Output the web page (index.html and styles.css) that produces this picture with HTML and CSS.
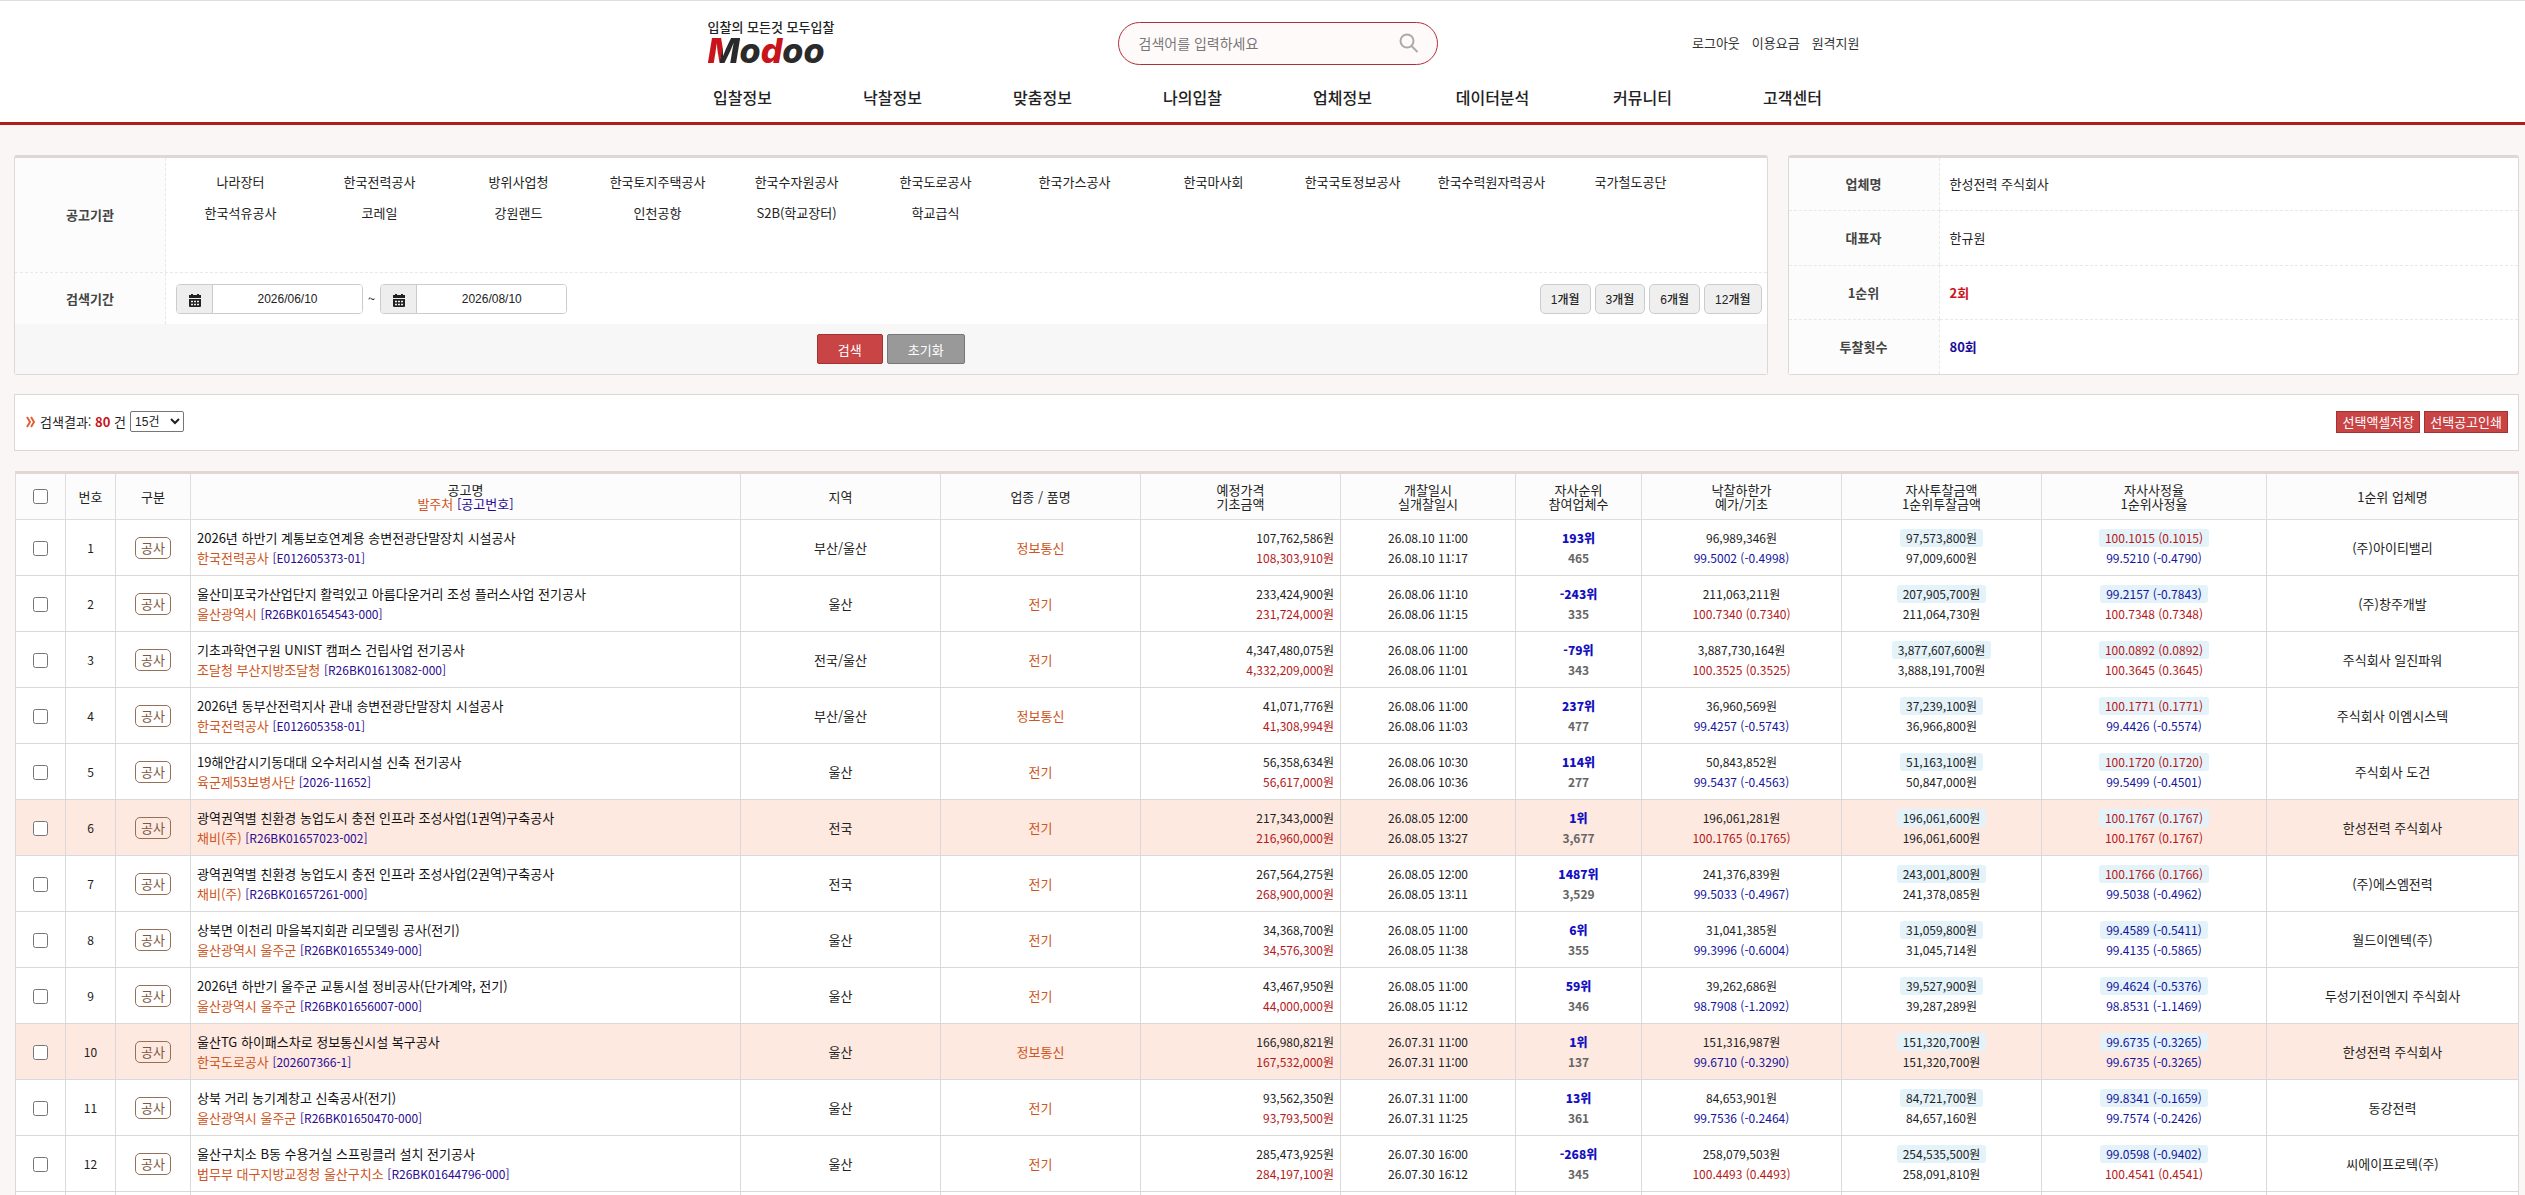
FILE: index.html
```html
<!DOCTYPE html>
<html lang="ko">
<head>
	<meta charset="UTF-8">
	<meta name="viewport" content="width=device-width, initial-scale=1.0">
	<title>모두입찰</title>
	<link rel="stylesheet" href="styles.css">
</head>
<body>

<!-- 상단 -->
<header class="header">
	<div class="header-inner">
		<div class="header-top">
			<a href="#" class="logo">
				<span class="logo-copy">입찰의 모든것 모두입찰</span>
				<span class="logo-name"><span class="logo-m">M</span>o<span class="logo-d">d</span>oo</span>
			</a>
			<form class="search">
				<input type="text" aria-label="검색어" placeholder="검색어를 입력하세요">
				<button type="button" aria-label="찾기">
					<svg width="20" height="20" viewBox="0 0 20 20" fill="none" stroke="#aaa" stroke-width="2"><circle cx="8" cy="8" r="6.5"/><path d="M12.5 13l6 6"/></svg>
				</button>
			</form>
			<div class="util">
				<a href="#">로그아웃</a>
				<a href="#">이용요금</a>
				<a href="#">원격지원</a>
			</div>
		</div>
		<nav class="nav">
			<a href="#">입찰정보</a>
			<a href="#">낙찰정보</a>
			<a href="#">맞춤정보</a>
			<a href="#">나의입찰</a>
			<a href="#">업체정보</a>
			<a href="#">데이터분석</a>
			<a href="#">커뮤니티</a>
			<a href="#">고객센터</a>
		</nav>
	</div>
</header>

<main class="content">
	<div class="top-row">
		<!-- 검색 조건 -->
		<form class="panel filter">
			<div class="row row-org">
				<div class="label">공고기관</div>
				<div class="orgs">
					<a href="#">나라장터</a>
					<a href="#">한국전력공사</a>
					<a href="#">방위사업청</a>
					<a href="#">한국토지주택공사</a>
					<a href="#">한국수자원공사</a>
					<a href="#">한국도로공사</a>
					<a href="#">한국가스공사</a>
					<a href="#">한국마사회</a>
					<a href="#">한국국토정보공사</a>
					<a href="#">한국수력원자력공사</a>
					<a href="#">국가철도공단</a>
					<a href="#">한국석유공사</a>
					<a href="#">코레일</a>
					<a href="#">강원랜드</a>
					<a href="#">인천공항</a>
					<a href="#">S2B(학교장터)</a>
					<a href="#">학교급식</a>
				</div>
			</div>
			<div class="row row-date">
				<div class="label">검색기간</div>
				<div class="dates">
					<label class="date">
						<span class="cal"><svg width="12" height="13" viewBox="0 0 12 13"><path fill="#222" d="M2 0h2v1h4V0h2v1h2v3H0V1h2zM0 5h12v7q0 1-1 1H1q-1 0-1-1z"/><path stroke="#eee" d="M2 7.500h2M5 7.500h2M8 7.500h2M2 10.500h2M5 10.500h2M8 10.500h2" stroke-width="1.500"/></svg></span>
						<input type="text" aria-label="시작일" value="2026/06/10">
					</label>
					<span>~</span>
					<label class="date">
						<span class="cal"><svg width="12" height="13" viewBox="0 0 12 13"><path fill="#222" d="M2 0h2v1h4V0h2v1h2v3H0V1h2zM0 5h12v7q0 1-1 1H1q-1 0-1-1z"/><path stroke="#eee" d="M2 7.500h2M5 7.500h2M8 7.500h2M2 10.500h2M5 10.500h2M8 10.500h2" stroke-width="1.500"/></svg></span>
						<input type="text" aria-label="종료일" value="2026/08/10">
					</label>
					<div class="months">
						<button type="button">1개월</button>
						<button type="button">3개월</button>
						<button type="button">6개월</button>
						<button type="button">12개월</button>
					</div>
				</div>
			</div>
			<div class="actions">
				<button type="button" class="btn">검색</button>
				<button type="button" class="btn btn-gray">초기화</button>
			</div>
		</form>

		<!-- 업체 정보 -->
		<table class="panel company">
			<tr><th>업체명</th><td>한성전력 주식회사</td></tr>
			<tr><th>대표자</th><td>한규원</td></tr>
			<tr><th>1순위</th><td><b class="cnt-red">2회</b></td></tr>
			<tr><th>투찰횟수</th><td><b class="cnt-blue">80회</b></td></tr>
		</table>
	</div>

	<!-- 검색 결과 -->
	<div class="result-bar">
		<svg width="10" height="12" viewBox="0 0 10 12" fill="none" stroke="#e0603a" stroke-width="2"><path d="M1 1l3 5-3 5M5 1l3 5-3 5"/></svg>
		<label for="pageSize">검색결과: <b class="cnt-red">80</b> 건</label>
		<select id="pageSize">
			<option>15건</option>
			<option>30건</option>
			<option>50건</option>
		</select>
		<div class="result-btns">
			<button type="button">선택액셀저장</button>
			<button type="button">선택공고인쇄</button>
		</div>
	</div>

	<table class="list">
		<colgroup>
			<col class="w50"><col class="w50"><col class="w75"><col>
			<col class="w200"><col class="w200"><col class="w200"><col class="w175"><col class="w126">
			<col class="w200"><col class="w200"><col class="w225"><col class="w252">
		</colgroup>
		<thead>
			<tr>
				<th><input type="checkbox" aria-label="전체선택"></th>
				<th>번호</th>
				<th>구분</th>
				<th>공고명<br><span class="org">발주처</span> <span class="code">[공고번호]</span></th>
				<th>지역</th>
				<th>업종 / 품명</th>
				<th>예정가격<br>기초금액</th>
				<th>개찰일시<br>실개찰일시</th>
				<th>자사순위<br>참여업체수</th>
				<th>낙찰하한가<br>예가/기초</th>
				<th>자사투찰금액<br>1순위투찰금액</th>
				<th>자사사정율<br>1순위사정율</th>
				<th>1순위 업체명</th>
			</tr>
		</thead>
		<tbody>
			<tr>
				<td><input type="checkbox" aria-label="1번 선택"></td><td class="num">1</td><td><span class="kind">공사</span></td>
				<td class="name"><a href="#">2026년 하반기 계통보호연계용 송변전광단말장치 시설공사</a><br><span class="org">한국전력공사</span> <span class="code num">[E012605373-01]</span></td>
				<td>부산/울산</td><td class="org">정보통신</td>
				<td class="price num">107,762,586원<br><span class="red">108,303,910원</span></td>
				<td class="num">26.08.10 11:00<br>26.08.10 11:17</td>
				<td class="rank num"><b>193위</b><br>465</td>
				<td class="num">96,989,346원<br><span class="blue">99.5002 (-0.4998)</span></td>
				<td class="num"><span class="own">97,573,800원</span><br>97,009,600원</td>
				<td class="num"><span class="own red">100.1015 (0.1015)</span><br><span class="blue">99.5210 (-0.4790)</span></td>
				<td>(주)아이티밸리</td>
			</tr>
			<tr>
				<td><input type="checkbox" aria-label="2번 선택"></td><td class="num">2</td><td><span class="kind">공사</span></td>
				<td class="name"><a href="#">울산미포국가산업단지 활력있고 아름다운거리 조성 플러스사업 전기공사</a><br><span class="org">울산광역시</span> <span class="code num">[R26BK01654543-000]</span></td>
				<td>울산</td><td class="org">전기</td>
				<td class="price num">233,424,900원<br><span class="red">231,724,000원</span></td>
				<td class="num">26.08.06 11:10<br>26.08.06 11:15</td>
				<td class="rank num"><b>-243위</b><br>335</td>
				<td class="num">211,063,211원<br><span class="red">100.7340 (0.7340)</span></td>
				<td class="num"><span class="own">207,905,700원</span><br>211,064,730원</td>
				<td class="num"><span class="own blue">99.2157 (-0.7843)</span><br><span class="red">100.7348 (0.7348)</span></td>
				<td>(주)창주개발</td>
			</tr>
			<tr>
				<td><input type="checkbox" aria-label="3번 선택"></td><td class="num">3</td><td><span class="kind">공사</span></td>
				<td class="name"><a href="#">기초과학연구원 UNIST 캠퍼스 건립사업 전기공사</a><br><span class="org">조달청 부산지방조달청</span> <span class="code num">[R26BK01613082-000]</span></td>
				<td>전국/울산</td><td class="org">전기</td>
				<td class="price num">4,347,480,075원<br><span class="red">4,332,209,000원</span></td>
				<td class="num">26.08.06 11:00<br>26.08.06 11:01</td>
				<td class="rank num"><b>-79위</b><br>343</td>
				<td class="num">3,887,730,164원<br><span class="red">100.3525 (0.3525)</span></td>
				<td class="num"><span class="own">3,877,607,600원</span><br>3,888,191,700원</td>
				<td class="num"><span class="own red">100.0892 (0.0892)</span><br><span class="red">100.3645 (0.3645)</span></td>
				<td>주식회사 일진파워</td>
			</tr>
			<tr>
				<td><input type="checkbox" aria-label="4번 선택"></td><td class="num">4</td><td><span class="kind">공사</span></td>
				<td class="name"><a href="#">2026년 동부산전력지사 관내 송변전광단말장치 시설공사</a><br><span class="org">한국전력공사</span> <span class="code num">[E012605358-01]</span></td>
				<td>부산/울산</td><td class="org">정보통신</td>
				<td class="price num">41,071,776원<br><span class="red">41,308,994원</span></td>
				<td class="num">26.08.06 11:00<br>26.08.06 11:03</td>
				<td class="rank num"><b>237위</b><br>477</td>
				<td class="num">36,960,569원<br><span class="blue">99.4257 (-0.5743)</span></td>
				<td class="num"><span class="own">37,239,100원</span><br>36,966,800원</td>
				<td class="num"><span class="own red">100.1771 (0.1771)</span><br><span class="blue">99.4426 (-0.5574)</span></td>
				<td>주식회사 이엠시스텍</td>
			</tr>
			<tr>
				<td><input type="checkbox" aria-label="5번 선택"></td><td class="num">5</td><td><span class="kind">공사</span></td>
				<td class="name"><a href="#">19해안감시기동대대 오수처리시설 신축 전기공사</a><br><span class="org">육군제53보병사단</span> <span class="code num">[2026-11652]</span></td>
				<td>울산</td><td class="org">전기</td>
				<td class="price num">56,358,634원<br><span class="red">56,617,000원</span></td>
				<td class="num">26.08.06 10:30<br>26.08.06 10:36</td>
				<td class="rank num"><b>114위</b><br>277</td>
				<td class="num">50,843,852원<br><span class="blue">99.5437 (-0.4563)</span></td>
				<td class="num"><span class="own">51,163,100원</span><br>50,847,000원</td>
				<td class="num"><span class="own red">100.1720 (0.1720)</span><br><span class="blue">99.5499 (-0.4501)</span></td>
				<td>주식회사 도건</td>
			</tr>
			<tr class="win">
				<td><input type="checkbox" aria-label="6번 선택"></td><td class="num">6</td><td><span class="kind">공사</span></td>
				<td class="name"><a href="#">광역권역별 친환경 농업도시 충전 인프라 조성사업(1권역)구축공사</a><br><span class="org">채비(주)</span> <span class="code num">[R26BK01657023-002]</span></td>
				<td>전국</td><td class="org">전기</td>
				<td class="price num">217,343,000원<br><span class="red">216,960,000원</span></td>
				<td class="num">26.08.05 12:00<br>26.08.05 13:27</td>
				<td class="rank num"><b>1위</b><br>3,677</td>
				<td class="num">196,061,281원<br><span class="red">100.1765 (0.1765)</span></td>
				<td class="num"><span class="own">196,061,600원</span><br>196,061,600원</td>
				<td class="num"><span class="own red">100.1767 (0.1767)</span><br><span class="red">100.1767 (0.1767)</span></td>
				<td>한성전력 주식회사</td>
			</tr>
			<tr>
				<td><input type="checkbox" aria-label="7번 선택"></td><td class="num">7</td><td><span class="kind">공사</span></td>
				<td class="name"><a href="#">광역권역별 친환경 농업도시 충전 인프라 조성사업(2권역)구축공사</a><br><span class="org">채비(주)</span> <span class="code num">[R26BK01657261-000]</span></td>
				<td>전국</td><td class="org">전기</td>
				<td class="price num">267,564,275원<br><span class="red">268,900,000원</span></td>
				<td class="num">26.08.05 12:00<br>26.08.05 13:11</td>
				<td class="rank num"><b>1487위</b><br>3,529</td>
				<td class="num">241,376,839원<br><span class="blue">99.5033 (-0.4967)</span></td>
				<td class="num"><span class="own">243,001,800원</span><br>241,378,085원</td>
				<td class="num"><span class="own red">100.1766 (0.1766)</span><br><span class="blue">99.5038 (-0.4962)</span></td>
				<td>(주)에스엠전력</td>
			</tr>
			<tr>
				<td><input type="checkbox" aria-label="8번 선택"></td><td class="num">8</td><td><span class="kind">공사</span></td>
				<td class="name"><a href="#">상북면 이천리 마을복지회관 리모델링 공사(전기)</a><br><span class="org">울산광역시 울주군</span> <span class="code num">[R26BK01655349-000]</span></td>
				<td>울산</td><td class="org">전기</td>
				<td class="price num">34,368,700원<br><span class="red">34,576,300원</span></td>
				<td class="num">26.08.05 11:00<br>26.08.05 11:38</td>
				<td class="rank num"><b>6위</b><br>355</td>
				<td class="num">31,041,385원<br><span class="blue">99.3996 (-0.6004)</span></td>
				<td class="num"><span class="own">31,059,800원</span><br>31,045,714원</td>
				<td class="num"><span class="own blue">99.4589 (-0.5411)</span><br><span class="blue">99.4135 (-0.5865)</span></td>
				<td>월드이엔텍(주)</td>
			</tr>
			<tr>
				<td><input type="checkbox" aria-label="9번 선택"></td><td class="num">9</td><td><span class="kind">공사</span></td>
				<td class="name"><a href="#">2026년 하반기 울주군 교통시설 정비공사(단가계약, 전기)</a><br><span class="org">울산광역시 울주군</span> <span class="code num">[R26BK01656007-000]</span></td>
				<td>울산</td><td class="org">전기</td>
				<td class="price num">43,467,950원<br><span class="red">44,000,000원</span></td>
				<td class="num">26.08.05 11:00<br>26.08.05 11:12</td>
				<td class="rank num"><b>59위</b><br>346</td>
				<td class="num">39,262,686원<br><span class="blue">98.7908 (-1.2092)</span></td>
				<td class="num"><span class="own">39,527,900원</span><br>39,287,289원</td>
				<td class="num"><span class="own blue">99.4624 (-0.5376)</span><br><span class="blue">98.8531 (-1.1469)</span></td>
				<td>두성기전이엔지 주식회사</td>
			</tr>
			<tr class="win">
				<td><input type="checkbox" aria-label="10번 선택"></td><td class="num">10</td><td><span class="kind">공사</span></td>
				<td class="name"><a href="#">울산TG 하이패스차로 정보통신시설 복구공사</a><br><span class="org">한국도로공사</span> <span class="code num">[202607366-1]</span></td>
				<td>울산</td><td class="org">정보통신</td>
				<td class="price num">166,980,821원<br><span class="red">167,532,000원</span></td>
				<td class="num">26.07.31 11:00<br>26.07.31 11:00</td>
				<td class="rank num"><b>1위</b><br>137</td>
				<td class="num">151,316,987원<br><span class="blue">99.6710 (-0.3290)</span></td>
				<td class="num"><span class="own">151,320,700원</span><br>151,320,700원</td>
				<td class="num"><span class="own blue">99.6735 (-0.3265)</span><br><span class="blue">99.6735 (-0.3265)</span></td>
				<td>한성전력 주식회사</td>
			</tr>
			<tr>
				<td><input type="checkbox" aria-label="11번 선택"></td><td class="num">11</td><td><span class="kind">공사</span></td>
				<td class="name"><a href="#">상북 거리 농기계창고 신축공사(전기)</a><br><span class="org">울산광역시 울주군</span> <span class="code num">[R26BK01650470-000]</span></td>
				<td>울산</td><td class="org">전기</td>
				<td class="price num">93,562,350원<br><span class="red">93,793,500원</span></td>
				<td class="num">26.07.31 11:00<br>26.07.31 11:25</td>
				<td class="rank num"><b>13위</b><br>361</td>
				<td class="num">84,653,901원<br><span class="blue">99.7536 (-0.2464)</span></td>
				<td class="num"><span class="own">84,721,700원</span><br>84,657,160원</td>
				<td class="num"><span class="own blue">99.8341 (-0.1659)</span><br><span class="blue">99.7574 (-0.2426)</span></td>
				<td>동강전력</td>
			</tr>
			<tr>
				<td><input type="checkbox" aria-label="12번 선택"></td><td class="num">12</td><td><span class="kind">공사</span></td>
				<td class="name"><a href="#">울산구치소 B동 수용거실 스프링클러 설치 전기공사</a><br><span class="org">법무부 대구지방교정청 울산구치소</span> <span class="code num">[R26BK01644796-000]</span></td>
				<td>울산</td><td class="org">전기</td>
				<td class="price num">285,473,925원<br><span class="red">284,197,100원</span></td>
				<td class="num">26.07.30 16:00<br>26.07.30 16:12</td>
				<td class="rank num"><b>-268위</b><br>345</td>
				<td class="num">258,079,503원<br><span class="red">100.4493 (0.4493)</span></td>
				<td class="num"><span class="own">254,535,500원</span><br>258,091,810원</td>
				<td class="num"><span class="own blue">99.0598 (-0.9402)</span><br><span class="red">100.4541 (0.4541)</span></td>
				<td>씨에이프로텍(주)</td>
			</tr>
			<tr class="end"><td></td><td></td><td></td><td></td><td></td><td></td><td></td><td></td><td></td><td></td><td></td><td></td><td></td></tr>
		</tbody>
	</table>
</main>

</body>
</html>
```

FILE: styles.css
```css
* {
	box-sizing: border-box;
}
body {
	margin: 0;
	background-color: #faf6f5;
	color: #222;
	font-family: "Noto Sans CJK KR", sans-serif;
	font-size: 13px;
	line-height: 20px;
}
a {
	color: inherit;
	text-decoration: none;
}
button, input, select {
	font-family: "Liberation Sans", "Noto Sans CJK KR", sans-serif;
	font-size: 12px;
	color: #222;
}
button {
	cursor: pointer;
}

/* 상단 */
.header {
	padding-left: 10px;
	background-color: #fff;
	border-top: 1px solid #dcdfdf;
	border-bottom: 3px solid #ae1c1c;
}
.header-inner {
	max-width: 1200px;
	margin: 0 auto;
}
.header-top {
	display: grid;
	grid-template-columns: 450px 320px 1fr;
	align-items: center;
	padding-top: 18px;
}
.logo {
	display: flex;
	flex-direction: column;
	padding-left: 40px;
}
.logo-copy {
	font-size: 13px;
	font-weight: 500;
	line-height: 16px;
}
.logo-name {
	font-family: Inter, sans-serif;
	font-size: 34px;
	font-weight: 800;
	font-style: italic;
	line-height: 32px;
	color: #2a2a2a;
}
.logo-m {
	background: linear-gradient(100deg, #c8141a 45%, #2a2a2a 45%);
	-webkit-background-clip: text;
	background-clip: text;
	color: transparent;
}
.logo-d {
	color: #c8141a;
}
.search {
	display: flex;
	align-items: center;
	height: 43px;
	padding: 0 18px 0 20px;
	border: 1px solid #b03038;
	border-radius: 22px;
	background-color: #fffafa;
}
.search input {
	flex: 1;
	min-width: 0;
	padding: 0;
	border: 0;
	background: none;
	font-family: "Noto Sans CJK KR", sans-serif;
	font-size: 14px;
}
.search input::placeholder {
	color: #777;
}
.search button {
	display: flex;
	padding: 0;
	border: 0;
	background: none;
}
.util {
	display: flex;
	justify-content: flex-end;
	gap: 12px;
	padding-right: 8px;
	color: #333;
}
.nav {
	display: grid;
	grid-template-columns: repeat(8, 1fr);
	padding: 18px 0 13px;
	text-align: center;
	font-size: 16px;
	font-weight: 500;
	line-height: 24px;
}

/* 검색 조건 */
.content {
	padding: 30px 6px 0 14px;
}
.top-row {
	display: grid;
	grid-template-columns: 70% 1fr;
	column-gap: 20px;
}
.panel {
	border: 1px solid #ddd8d8;
	border-top: 3px solid #e0d6d4;
	border-radius: 3px;
	background-color: #fff;
}
.row {
	display: grid;
	grid-template-columns: 151px 1fr;
}
.row-org {
	height: 115px;
	border-bottom: 1px dashed #e8e8e8;
}
.row-date {
	height: 51px;
}
.label {
	display: flex;
	align-items: center;
	justify-content: center;
	border-right: 1px dashed #e8e8e8;
	background-color: #fcfcfc;
	color: #444;
	font-weight: bold;
}
.orgs {
	display: flex;
	flex-wrap: wrap;
	align-content: flex-start;
	padding: 8px 5px;
	line-height: 31px;
	text-align: center;
}
.orgs a {
	width: 139px;
}
.dates {
	display: flex;
	align-items: center;
	gap: 5px;
	padding: 0 5px 0 10px;
}
.date {
	display: flex;
	width: 187px;
	height: 30px;
	border: 1px solid #ccc;
	border-radius: 4px;
	overflow: hidden;
}
.cal {
	display: flex;
	align-items: center;
	justify-content: center;
	width: 36px;
	padding-top: 4px;
	border-right: 1px solid #ccc;
	background-color: #eee;
}
.date input {
	flex: 1;
	min-width: 0;
	border: 0;
	text-align: center;
}
.months {
	display: flex;
	gap: 4px;
	margin-left: auto;
}
.months button {
	height: 30px;
	padding: 0 10px;
	border: 1px solid #ccc;
	border-radius: 5px;
	background-color: #efefef;
	font-weight: 500;
}
.actions {
	display: flex;
	justify-content: center;
	gap: 4px;
	height: 50px;
	padding: 10px 0;
	background-color: #f7f7f7;
}
.btn {
	padding: 0 20px;
	border: 1px solid #a33232;
	border-radius: 2px;
	background-color: #c94445;
	color: #fff;
	font-size: 13px;
}
.btn-gray {
	border-color: #777;
	background-color: #999;
}

/* 업체 정보 */
.company {
	width: 100%;
	border-spacing: 0;
}
.company th {
	width: 151px;
	padding: 0;
	border-right: 1px dashed #e8e8e8;
	background-color: #fcfcfc;
	color: #444;
}
.company td {
	padding: 0 10px;
}
.company tr + tr th, .company tr + tr td {
	border-top: 1px dashed #e8e8e8;
}
.cnt-red {
	color: #c8141a;
}
.cnt-blue {
	color: #1a0d9c;
}

/* 검색 결과 */
.result-bar {
	display: flex;
	align-items: center;
	gap: 4px;
	height: 57px;
	margin: 19px 0 20px;
	padding: 0 10px 2px 11px;
	border: 1px solid #ddd6d4;
	background-color: #fff;
}
.result-bar select {
	width: 54px;
	height: 21px;
	border: 1px solid #767676;
	border-radius: 2px;
	background-color: #fff;
}
.result-btns {
	display: flex;
	gap: 4px;
	margin-left: auto;
}
.result-btns button {
	height: 22px;
	padding: 0 5px;
	border: 1px solid #a33232;
	background-color: #c94445;
	color: #fff;
	font-size: 13px;
}

/* 목록 */
.list {
	width: calc(100% - 1px);
	margin-left: 1px;
	table-layout: fixed;
	border-collapse: collapse;
	border-top: 3px solid #e2d6d4;
	background-color: #fff;
	text-align: center;
}
.w50 { width: 50px; }
.w75 { width: 75px; }
.w126 { width: 126px; }
.w175 { width: 175px; }
.w200 { width: 200px; }
.w225 { width: 225px; }
.w252 { width: 252px; }
.list th {
	height: 47px;
	padding: 0;
	border: 1px solid #ddd;
	border-top: 0;
	background-color: #fcfcfc;
	font-weight: normal;
	line-height: 14px;
}
.list td {
	height: 56px;
	padding: 0 6px;
	border: 1px solid #d9d9d9;
}
.list input {
	width: 15px;
	height: 15px;
	margin: 0;
	vertical-align: middle;
}
.list .win td {
	background-color: #fde9e0;
}
.list .end td {
	height: 4px;
	border-bottom: 0;
}
.list .name {
	text-align: left;
}
.list .price {
	text-align: right;
}
.list .num {
	font-size: 12px;
}
.name a {
	color: #111;
}
.org {
	color: #cf5420;
}
.code {
	color: #2a0a94;
}
.kind {
	display: inline-block;
	padding: 0 5px;
	border: 1px solid #96705a;
	border-radius: 5px;
	color: #80563e;
}
.red {
	color: #b41818;
}
.blue {
	color: #1414a0;
}
.rank {
	color: #666;
	font-weight: bold;
}
.rank b {
	color: #1410c0;
}
.own {
	display: inline-block;
	padding: 0 6px;
	border-radius: 3px;
	background-color: #e4f2f9;
	line-height: 18px;
}
```
